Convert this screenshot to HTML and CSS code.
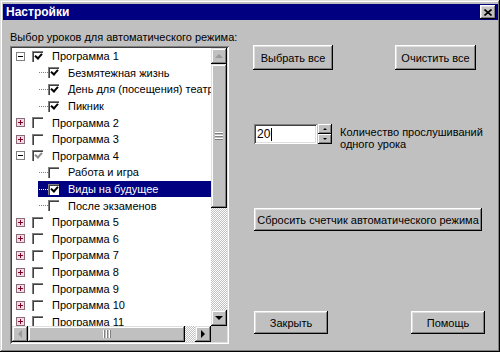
FILE: index.html
```html
<!DOCTYPE html>
<html lang="ru">
<head>
    <meta charset="UTF-8">
    <title>Настройки</title>
    <link rel="stylesheet" href="styles.css">
</head>
<body>
    <div class="window">
        <div class="titlebar">
            <span class="title">Настройки</span>
            <span class="close-btn">
                <svg width="8" height="7" viewBox="0 0 8 7"><path d="M0.5 0.5 L7.5 6.5 M7.5 0.5 L0.5 6.5" stroke="#000" stroke-width="1.6"/></svg>
            </span>
        </div>

        <div class="body">
            <div class="left-col">
                <div class="label">Выбор уроков для автоматического режима:</div>
                <div class="tree">
                    <div class="tree-list">
                        <div class="node"><span class="exp minus"></span><span class="cb on"></span><span class="txt">Программа 1</span></div>
                        <div class="node child"><span class="line"></span><span class="cb on"></span><span class="txt">Безмятежная жизнь</span></div>
                        <div class="node child"><span class="line"></span><span class="cb on"></span><span class="txt">День для (посещения) театра</span></div>
                        <div class="node child"><span class="line"></span><span class="cb on"></span><span class="txt">Пикник</span></div>
                        <div class="node"><span class="exp plus"></span><span class="cb"></span><span class="txt">Программа 2</span></div>
                        <div class="node"><span class="exp plus"></span><span class="cb"></span><span class="txt">Программа 3</span></div>
                        <div class="node"><span class="exp minus"></span><span class="cb part"></span><span class="txt">Программа 4</span></div>
                        <div class="node child"><span class="line"></span><span class="cb"></span><span class="txt">Работа и игра</span></div>
                        <div class="node child selected"><span class="line"></span><span class="cb on"></span><span class="txt">Виды на будущее</span></div>
                        <div class="node child"><span class="line"></span><span class="cb"></span><span class="txt">После экзаменов</span></div>
                        <div class="node"><span class="exp plus"></span><span class="cb"></span><span class="txt">Программа 5</span></div>
                        <div class="node"><span class="exp plus"></span><span class="cb"></span><span class="txt">Программа 6</span></div>
                        <div class="node"><span class="exp plus"></span><span class="cb"></span><span class="txt">Программа 7</span></div>
                        <div class="node"><span class="exp plus"></span><span class="cb"></span><span class="txt">Программа 8</span></div>
                        <div class="node"><span class="exp plus"></span><span class="cb"></span><span class="txt">Программа 9</span></div>
                        <div class="node"><span class="exp plus"></span><span class="cb"></span><span class="txt">Программа 10</span></div>
                        <div class="node"><span class="exp plus"></span><span class="cb"></span><span class="txt">Программа 11</span></div>
                    </div>
                    <div class="vscroll">
                        <span class="sb-btn"><i class="arr up dis"></i></span>
                        <span class="thumb v-thumb"><i class="grip-h"></i></span>
                        <span class="track"></span>
                        <span class="sb-btn"><i class="arr down"></i></span>
                    </div>
                    <div class="hscroll">
                        <span class="sb-btn"><i class="arr left dis"></i></span>
                        <span class="thumb h-thumb"><i class="grip-v"></i></span>
                        <span class="track"></span>
                        <span class="sb-btn"><i class="arr right"></i></span>
                    </div>
                    <div class="corner"></div>
                </div>
            </div>

            <div class="right-col">
                <div class="btn-row top-row">
                    <button class="btn w80">Выбрать все</button>
                    <button class="btn w81">Очистить все</button>
                </div>

                <div class="spin-row">
                    <div class="spin-input">20<span class="caret"></span></div>
                    <div class="spin-btns">
                        <span class="spin-btn"><i class="mini up"></i></span>
                        <span class="spin-btn"><i class="mini down"></i></span>
                    </div>
                    <div class="spin-label">Количество прослушиваний<br>одного урока</div>
                </div>

                <button class="btn reset-btn">Сбросить счетчик автоматического режима</button>

                <div class="btn-row bottom-row">
                    <button class="btn w74">Закрыть</button>
                    <button class="btn w74">Помощь</button>
                </div>
            </div>
        </div>
    </div>
</body>
</html>
```

FILE: styles.css
```css
* { margin: 0; padding: 0; box-sizing: border-box; }
body {
    background: #c0c0c0;
    font-family: "Liberation Sans", Arial, sans-serif;
    font-size: 11px;
    color: #000;
}
.window {
    width: 500px;
    height: 352px;
    background: #c0c0c0;
    padding: 4px 2px 0 3px;
    box-shadow: inset -1px -1px #000, inset 1px 1px #dfdfdf, inset -2px -2px #808080, inset 2px 2px #fff;
    overflow: hidden;
}
.titlebar {
    height: 16px;
    background: #000080;
    display: flex;
    align-items: center;
    justify-content: space-between;
    padding: 0 2px 0 3px;
}
.title {
    color: #fff;
    font-weight: 700;
    font-size: 12px;
}
.close-btn {
    width: 16px;
    height: 14px;
    background: #c0c0c0;
    display: flex;
    align-items: center;
    justify-content: center;
    box-shadow: inset -1px -1px #000, inset 1px 1px #fff, inset -2px -2px #808080, inset 2px 2px #dfdfdf;
}

/* main area */
.body {
    display: grid;
    grid-template-columns: 219px 232px;
    column-gap: 24px;
    padding: 11px 0 0 7px;
}
.label {
    line-height: 13px;
    height: 13px;
    white-space: nowrap;
    margin-bottom: 2px;
}

/* tree */
.tree {
    height: 298px;
    background: #fff;
    padding: 2px;
    box-shadow: inset 1px 1px #808080, inset -1px -1px #fff, inset 2px 2px #404040, inset -2px -2px #dfdfdf;
    display: grid;
    grid-template-columns: 1fr 16px;
    grid-template-rows: 1fr 16px;
}
.tree-list {
    overflow: hidden;
    background: #fff;
}
.node {
    height: 16.6px;
    display: flex;
    align-items: center;
    padding-left: 4px;
    white-space: nowrap;
}
.node.child {
    margin-left: 26px;
    padding-left: 1px;
}
.node.selected {
    background: #000080;
    color: #fff;
}
.exp {
    width: 9px;
    height: 9px;
    border: 1px solid #808080;
    background: #fff;
    margin-right: 7px;
    position: relative;
    flex: none;
}
.exp::before {
    content: "";
    position: absolute;
    left: 1px;
    top: 3px;
    width: 5px;
    height: 1px;
    background: #000;
}
.exp.plus {
    background: #f0dce6;
    border-color: #8a6a78;
}
.exp.plus::before { background: #800020; }
.exp.plus::after {
    content: "";
    position: absolute;
    left: 3px;
    top: 1px;
    width: 1px;
    height: 5px;
    background: #800020;
}
.line {
    width: 9px;
    border-top: 1px dotted #808080;
    flex: none;
}
.selected .line { border-top-color: #fff; }
.cb {
    width: 11px;
    height: 11px;
    background: #fff;
    margin-right: 9px;
    flex: none;
    box-shadow: inset 1px 1px #808080, inset 2px 2px #404040, inset -1px -1px #fff;
    position: relative;
}
.cb.on::after, .cb.part::after {
    content: "";
    position: absolute;
    left: 3px;
    top: 2px;
    width: 5px;
    height: 3px;
    border-left: 2px solid #000;
    border-bottom: 2px solid #000;
    transform: rotate(-48deg);
    transform-origin: 50% 50%;
}
.cb.part::after { border-color: #8c8c8c; }
.cb.on::after { top: 2px; }

/* scrollbars */
.vscroll, .hscroll {
    display: flex;
    background: #c0c0c0;
}
.vscroll { flex-direction: column; }
.sb-btn, .thumb {
    background: #c0c0c0;
    box-shadow: inset -1px -1px #000, inset 1px 1px #dfdfdf, inset -2px -2px #808080, inset 2px 2px #fff;
    display: flex;
    align-items: center;
    justify-content: center;
    flex: none;
}
.sb-btn { width: 16px; height: 16px; }
.v-thumb { width: 16px; height: 144px; }
.h-thumb { height: 16px; width: 157px; }
.track {
    flex: 1;
    background: repeating-conic-gradient(#fff 0 25%, #c0c0c0 0 50%) 0 0 / 2px 2px;
}
.corner { background: #c0c0c0; }
.arr {
    width: 0;
    height: 0;
    border: 4px solid transparent;
}
.arr.up { border-bottom-color: #000; border-top-width: 0; margin-top: -1px; }
.arr.down { border-top-color: #000; border-bottom-width: 0; }
.arr.left { border-right-color: #000; border-left-width: 0; }
.arr.right { border-left-color: #000; border-right-width: 0; }
.arr.up.dis { border-bottom-color: #9a9a9a; }
.arr.left.dis { border-right-color: #9a9a9a; }
.grip-h {
    width: 8px;
    height: 8px;
    background: repeating-linear-gradient(to bottom, #fff 0 1px, #808080 1px 2px, transparent 2px 3px);
}
.grip-v {
    width: 8px;
    height: 8px;
    background: repeating-linear-gradient(to right, #fff 0 1px, #808080 1px 2px, transparent 2px 3px);
}

/* right column */
.right-col {
    display: flex;
    flex-direction: column;
}
.btn {
    font-family: inherit;
    font-size: 11px;
    color: #000;
    background: #c0c0c0;
    border: none;
    box-shadow: inset -1px -1px #000, inset 1px 1px #fff, inset -2px -2px #808080, inset 2px 2px #dfdfdf;
    height: 23px;
}
.btn-row {
    display: flex;
    justify-content: space-between;
}
.top-row {
    margin-top: 14px;
    padding-right: 9px;
}
.top-row .btn { height: 25px; }
.w80 { width: 80px; }
.w81 { width: 81px; }
.w74 { width: 74px; }
.spin-row {
    display: flex;
    align-items: flex-start;
    margin: 54px 0 0 1px;
}
.spin-input {
    width: 63px;
    height: 20px;
    background: #fff;
    padding: 3px 0 0 3px;
    line-height: 14px;
    font-size: 12px;
    box-shadow: inset 1px 1px #808080, inset -1px -1px #fff, inset 2px 2px #404040, inset -2px -2px #dfdfdf;
    display: flex;
    align-items: flex-start;
}
.caret {
    width: 1px;
    height: 13px;
    background: #000;
    margin: 1px 0 0 1px;
}
.spin-btns {
    display: flex;
    flex-direction: column;
    margin-left: 1px;
    width: 14px;
}
.spin-btn {
    height: 10px;
    background: #c0c0c0;
    box-shadow: inset -1px -1px #000, inset 1px 1px #fff, inset -2px -2px #808080;
    display: flex;
    align-items: center;
    justify-content: center;
}
.mini {
    width: 0;
    height: 0;
    border: 2px solid transparent;
}
.mini.up { border-bottom-color: #000; border-top-width: 0; }
.mini.down { border-top-color: #000; border-bottom-width: 0; }
.spin-label {
    margin-left: 8px;
    line-height: 12px;
    padding-top: 2px;
}
.reset-btn {
    width: 228px;
    margin: 58px 0 0 1px;
}
.bottom-row {
    margin: 80px 0 0 1px;
}
```
